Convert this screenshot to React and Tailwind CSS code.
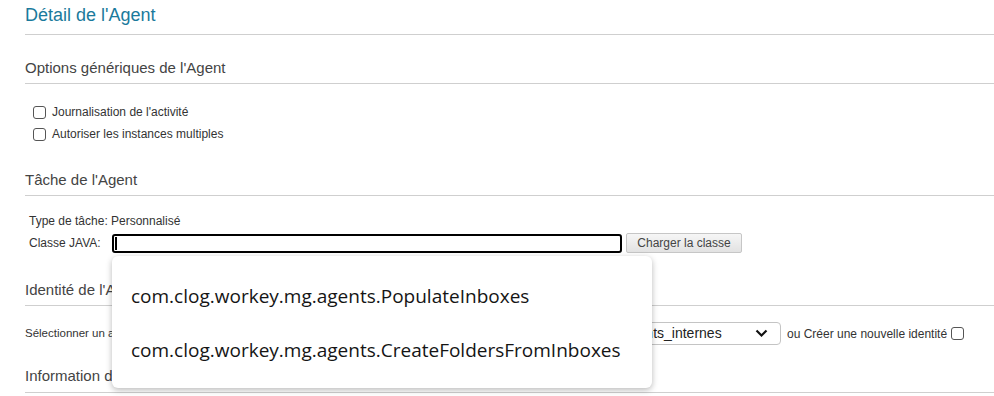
import React from "react";

const SectionTitle = ({ children, className = "" }) => (
  <div className={`text-[15px] leading-[17px] text-[#444] pb-[7px] border-b border-[#cfcfcf] ${className}`}>
    {children}
  </div>
);

const Box = ({ className = "" }) => (
  <span className={`inline-block w-[13px] h-[13px] border border-[#555] rounded-[3px] bg-white ${className}`} />
);

const suggestions = [
  "com.clog.workey.mg.agents.PopulateInboxes",
  "com.clog.workey.mg.agents.CreateFoldersFromInboxes",
];

export default function App() {
  return (
    <div className="w-[994px] h-[396px] overflow-hidden bg-white pl-[25px] font-['Liberation_Sans',Arial,sans-serif]">
      {/* Title */}
      <h1 className="mt-[5px] text-[18px] leading-[20px] text-[#1a7a9c] pb-[9px] border-b border-[#cfcfcf]">
        Détail de l'Agent
      </h1>

      {/* Options */}
      <SectionTitle className="mt-[24px]">Options génériques de l'Agent</SectionTitle>
      <div className="mt-[17px] text-[12px] text-[#333]">
        <div className="flex items-center h-[22px] pl-[8px] gap-[6px]">
          <Box />
          <span>Journalisation de l'activité</span>
        </div>
        <div className="flex items-center h-[22px] pl-[8px] gap-[6px]">
          <Box />
          <span>Autoriser les instances multiples</span>
        </div>
      </div>

      {/* Tâche */}
      <SectionTitle className="mt-[26px]">Tâche de l'Agent</SectionTitle>
      <div className="mt-[18px] pl-[4px] text-[12px] text-[#333]">
        <div className="flex items-center h-[14px]">
          <span className="w-[82px]">Type de tâche:</span>
          <span>Personnalisé</span>
        </div>
        <div className="flex items-center mt-[5px] h-[20px]">
          <span className="w-[83px]">Classe JAVA:</span>
          <div className="relative">
            <div className="w-[510px] h-[19px] border-2 border-black rounded-[3px] bg-white flex items-center pl-[1px]">
              <span className="w-[2px] h-[13px] bg-black" />
            </div>
            {/* autocomplete popup */}
            <div className="absolute left-0 top-[22px] w-[540px] h-[132px] bg-white rounded-[6px] shadow-[0_2px_6px_rgba(0,0,0,0.28)] pt-[14px] z-10 font-['Open_Sans','Noto_Sans',sans-serif] text-[19px] text-[#151515]">
              {suggestions.map((s) => (
                <div key={s} className="h-[54px] flex items-center pl-[19px]">
                  {s}
                </div>
              ))}
            </div>
          </div>
          <button className="ml-[4px] w-[116px] h-[20px] border border-[#c6c6c6] rounded-[2px] bg-gradient-to-b from-[#f6f6f6] to-[#e2e2e2] text-[12px] text-[#444]">
            Charger la classe
          </button>
        </div>
      </div>

      {/* Identité */}
      <SectionTitle className="mt-[28px]">Identité de l'Agent</SectionTitle>
      <div className="mt-[16px] flex items-center h-[23px] text-[12px] text-[#333]">
        <span className="w-[588px] text-[11.5px]">Sélectionner un agent existant :</span>
        <div className="w-[168px] h-[23px] border border-[#c4c4c4] rounded-[4px] bg-white flex items-center justify-between pl-[8px] pr-[12px] text-[14px] text-[#222]">
          <span>agents_internes</span>
          <svg width="13" height="9" viewBox="0 0 13 9" fill="none">
            <path d="M1.5 1.5 L6.5 6.5 L11.5 1.5" stroke="#111" strokeWidth="2.2" />
          </svg>
        </div>
        <span className="ml-[6px]">ou Créer une nouvelle identité</span>
        <Box className="ml-[4px]" />
      </div>

      {/* Information */}
      <SectionTitle className="mt-[22px] pb-[8px]">Information de l'Agent</SectionTitle>
    </div>
  );
}
